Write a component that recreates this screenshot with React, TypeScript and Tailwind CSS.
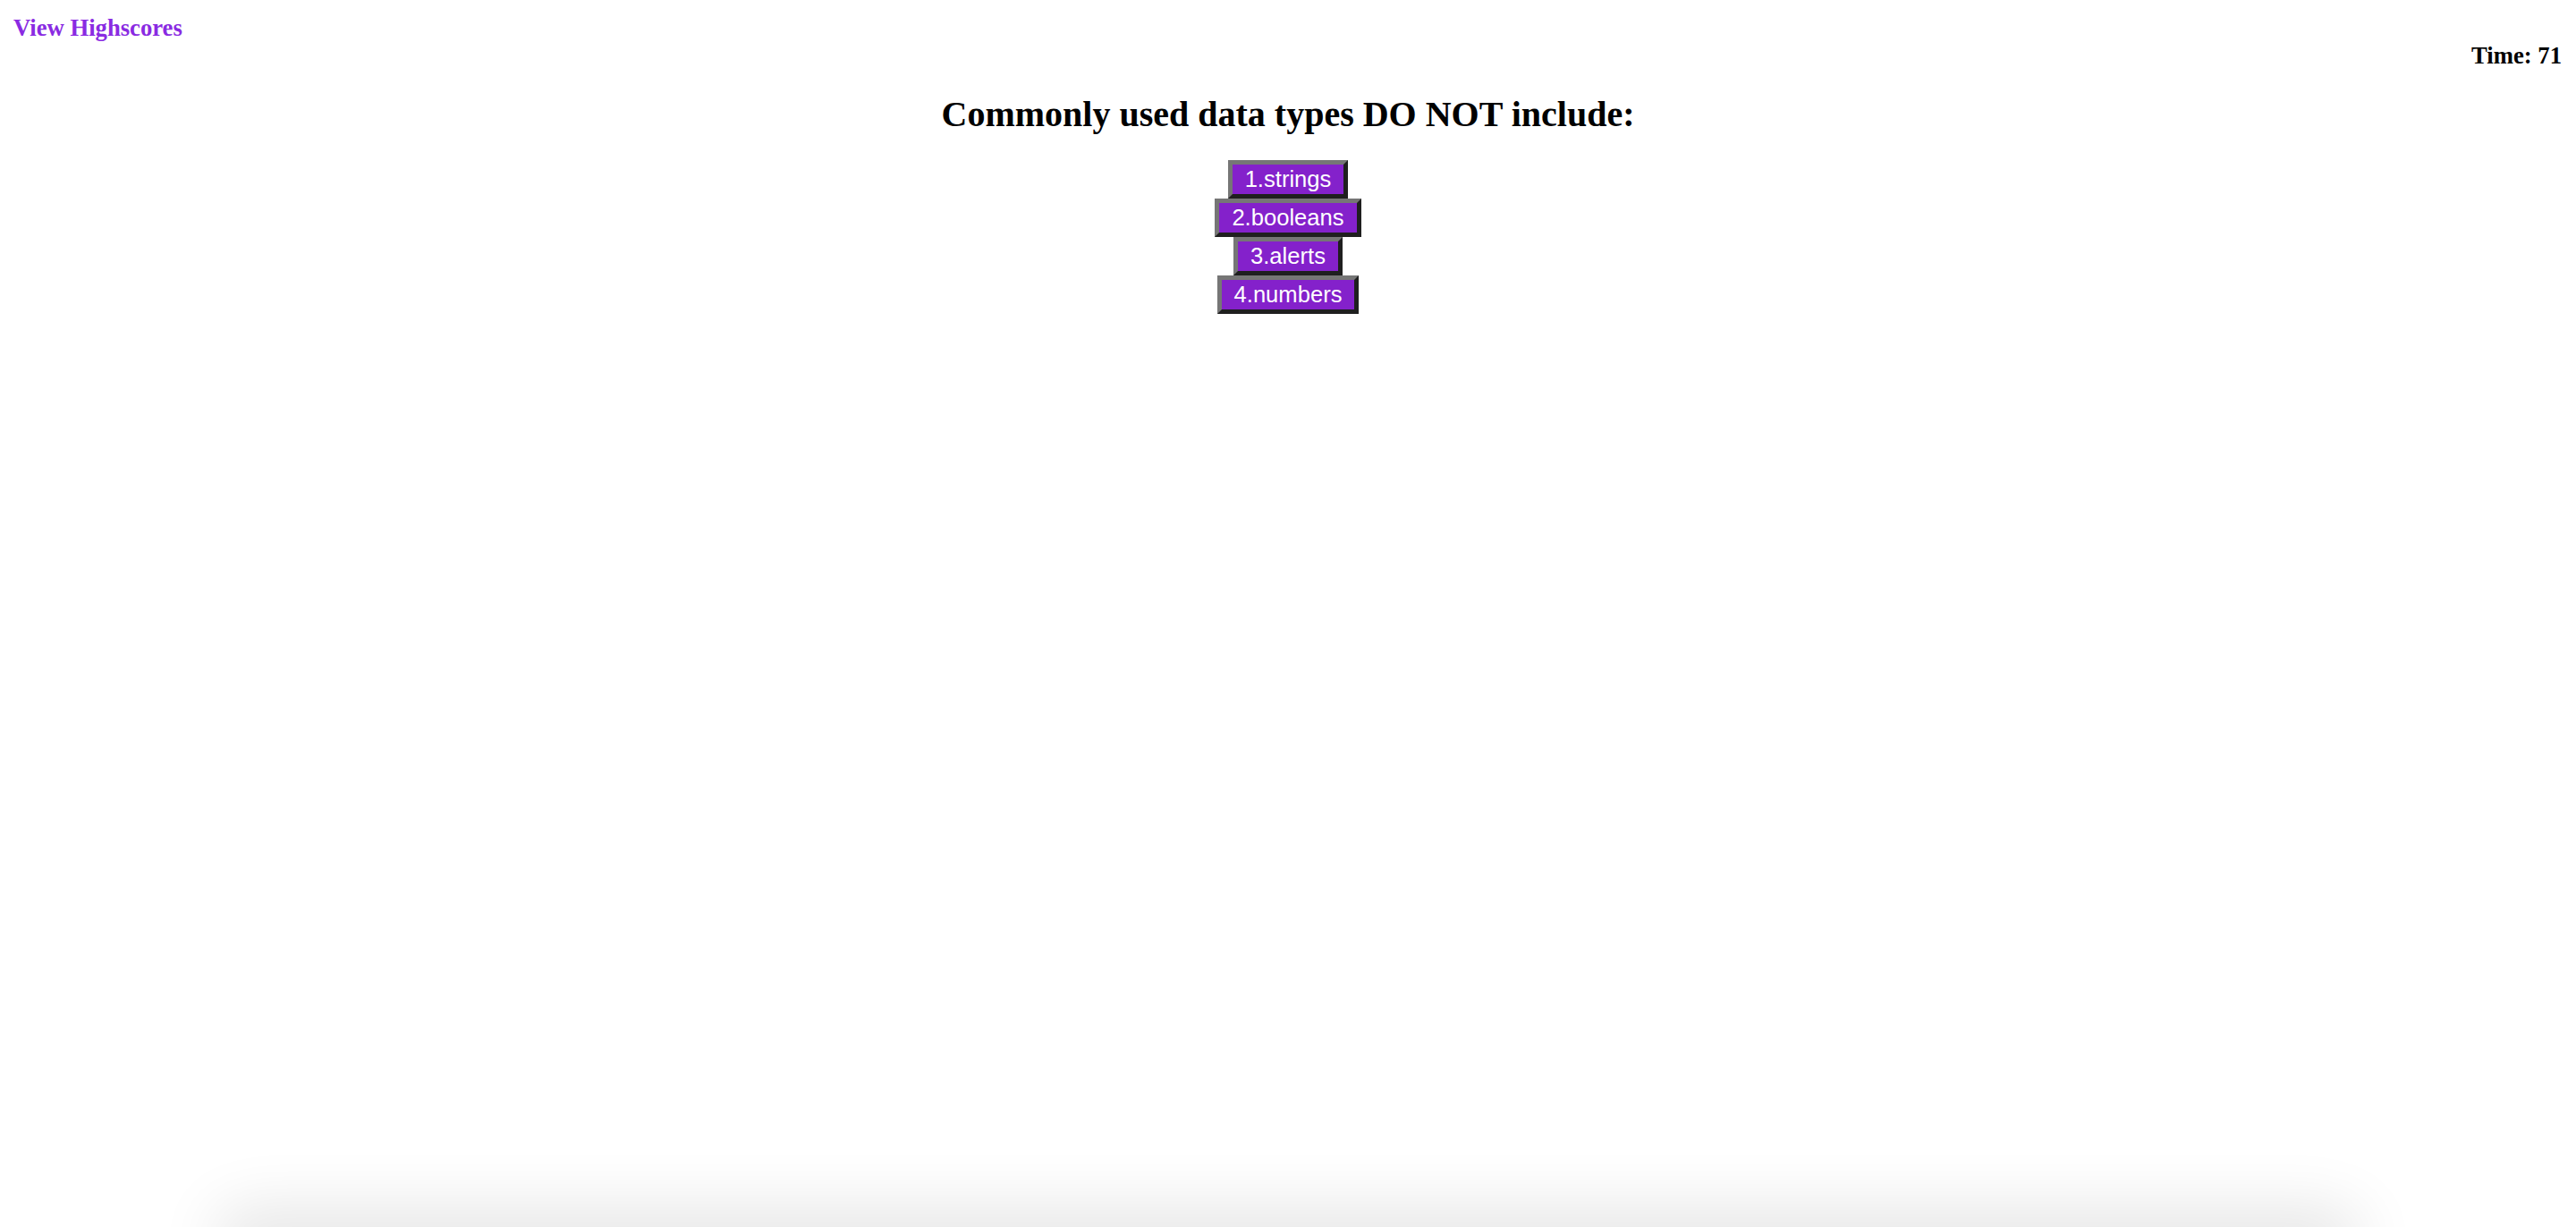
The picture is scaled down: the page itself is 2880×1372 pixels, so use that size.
import React from "react";

const answers = ["1.strings", "2.booleans", "3.alerts", "4.numbers"];

export default function App() {
  return (
    <div className="relative h-[1372px] w-full overflow-hidden bg-white font-['Liberation_Serif',serif] text-black">
      <header className="pt-[16px]">
        <a
          href="#"
          className="block pl-[15px] text-[26.67px] font-bold leading-[normal] text-[#8a2be2] no-underline"
        >
          View Highscores
        </a>
        <p className="mt-0 pr-[16px] text-right text-[26.67px] font-bold leading-[normal]">
          Time: 71
        </p>
      </header>
      <main className="mt-[26px] flex flex-col items-center">
        <h2 className="text-center text-[40px] font-bold leading-[normal]">
          Commonly used data types DO NOT include:
        </h2>
        <div className="mt-[28px] flex flex-col items-center">
          {answers.map((a) => (
            <button
              key={a}
              className="border-[5px] border-b-[#1f1f1f] border-l-[#767676] border-r-[#1f1f1f] border-t-[#767676] bg-[#8421cb] px-[14px] py-[2px] font-['Liberation_Sans',Arial,sans-serif] text-[25.6px] leading-[normal] text-white"
            >
              {a}
            </button>
          ))}
        </div>
      </main>
      <div className="pointer-events-none absolute left-[260px] right-[260px] top-full h-[30px] rounded-full shadow-[0_0_70px_20px_rgba(0,0,0,0.11)]" />
    </div>
  );
}
